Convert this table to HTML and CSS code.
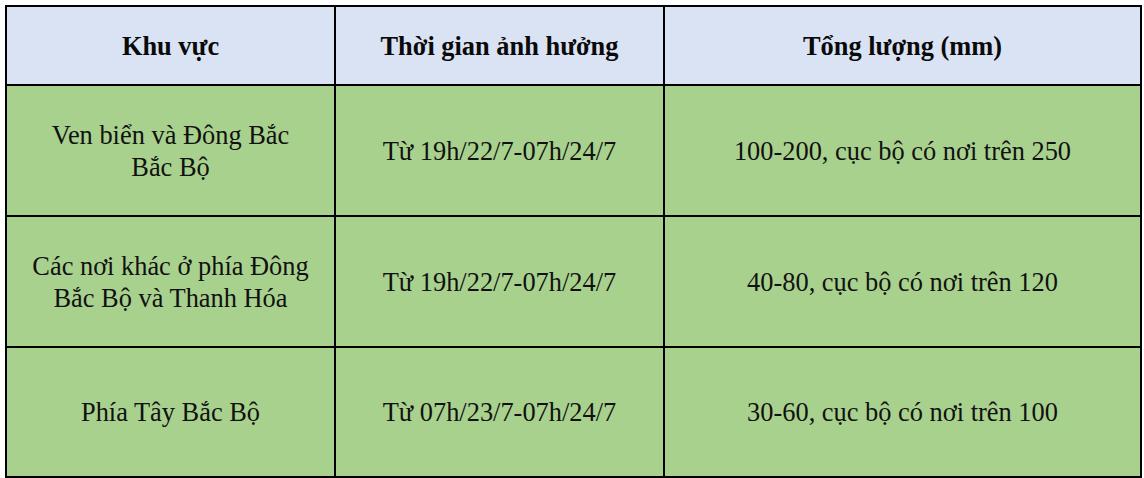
FILE: index.html
```html
<!DOCTYPE html>
<html lang="vi">
<head>
<meta charset="utf-8">
<title>Lượng mưa</title>
<link rel="stylesheet" href="styles.css">
</head>
<body>
<table class="rain">
  <colgroup>
    <col class="c1">
    <col class="c2">
    <col class="c3">
  </colgroup>
  <thead>
    <tr class="head">
      <th>Khu vực</th>
      <th>Thời gian ảnh hưởng</th>
      <th>Tổng lượng (mm)</th>
    </tr>
  </thead>
  <tbody>
    <tr class="r1">
      <td>Ven biển và Đông Bắc<br>Bắc Bộ</td>
      <td>Từ 19h/22/7-07h/24/7</td>
      <td>100-200, cục bộ có nơi trên 250</td>
    </tr>
    <tr class="r2">
      <td>Các nơi khác ở phía Đông<br>Bắc Bộ và Thanh Hóa</td>
      <td>Từ 19h/22/7-07h/24/7</td>
      <td>40-80, cục bộ có nơi trên 120</td>
    </tr>
    <tr class="r3">
      <td>Phía Tây Bắc Bộ</td>
      <td>Từ 07h/23/7-07h/24/7</td>
      <td>30-60, cục bộ có nơi trên 100</td>
    </tr>
  </tbody>
</table>
</body>
</html>
```

FILE: styles.css
```css
html, body {
  margin: 0;
  padding: 0;
  background: #ffffff;
}
body {
  padding: 5px 0 0 5px;
}
.rain {
  border-collapse: collapse;
  table-layout: fixed;
  width: 1135px;
  font-family: "Liberation Serif", "Times New Roman", serif;
  font-size: 26.4px;
  line-height: 32px;
  color: #111;
  border: 2px solid #000;
}
.c1 { width: 329px; }
.c2 { width: 329px; }
.c3 { width: 477px; }
.rain th,
.rain td {
  border: 2px solid #000;
  text-align: center;
  vertical-align: middle;
  padding: 0;
}
.rain th {
  background: #dae3f3;
  font-weight: bold;
  color: #0a0a0a;
}
.rain td {
  background: #a9d18e;
}
.head { height: 79px; }
.r1 { height: 131px; }
.r2 { height: 131px; }
.r3 { height: 130px; }
```
